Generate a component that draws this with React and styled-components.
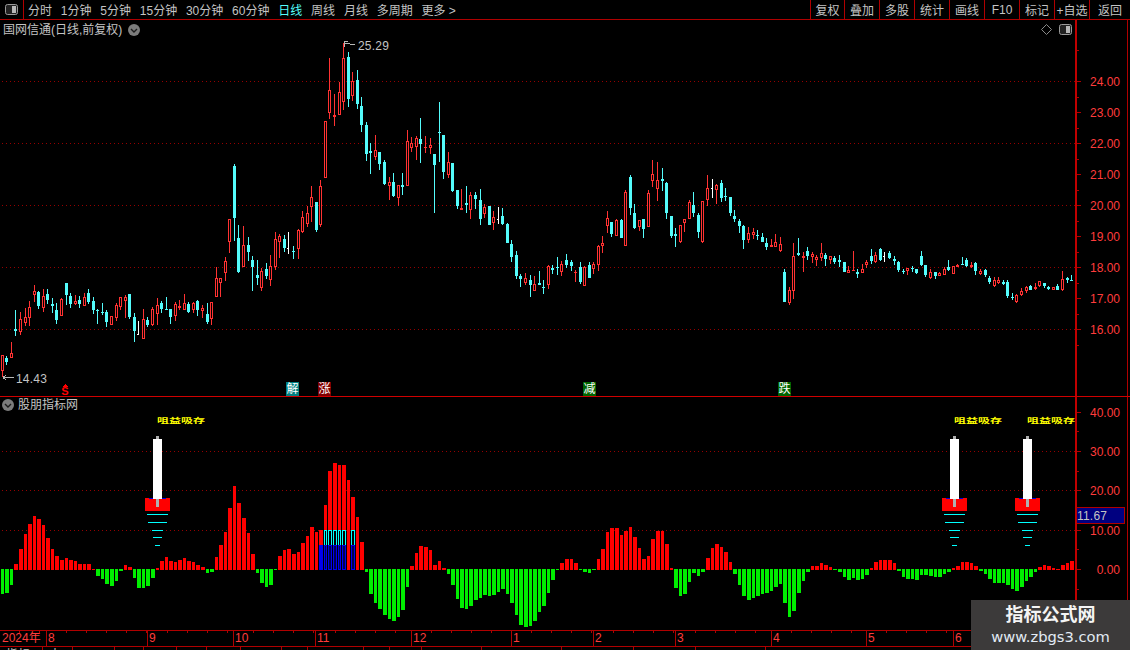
import React from 'react';
import styled, { createGlobalStyle } from 'styled-components';

const RED_LINE = '#b00000';
const AXIS_RED = '#ff3c3c';
const CANDLE_RED = '#ff3232';
const CANDLE_CYAN = '#54fcfc';
const GRID_RED = '#960000';
const FONT = '"Liberation Sans", "Noto Sans CJK SC", sans-serif';

// candles read off the chart: kind hi,top,bottom,lo (3x values above a base y)
const parse = (base, text) =>
  text.trim().split(/\s+/).map((tok) => {
    const [hi, top, bot, lo] = tok.slice(1).split(',').map((n) => Math.round(base + Number(n) / 3));
    return { kind: tok[0], hi, top, bot, lo };
  });

const candles = [
  ...parse(260, `r285,286,332,350 c288,293,305,316 r247,279,293,295 c150,207,213,228 r157,178,216,224
    r145,172,190,198 r124,141,173,198 r75,93,105,125 c94,96,138,146 r88,108,143,155 c87,102,120,132
    c115,132,138,158 c130,150,180,192 r115,117,167,168 c70,70,105,135 c98,108,132,145 r105,124,132,136
    c108,120,132,145 r98,112,137,138 c87,98,126,131 c110,123,150,162 c148,149,151,192 c128,155,157,165
    c150,156,186,201 r168,168,194,195 r130,135,173,183 r110,112,140,150 r105,112,122,173 c102,102,172,177
    c160,171,213,245 w183,222,225,225 r148,178,236,236 c170,180,196,200 r142,147,195,198 r113,136,162,195
    c122,128,147,158 c110,146,148,150 c147,148,171,192 r127,133,167,182 r120,138,143,150 r102,130,150,150
    c126,132,157,160 r125,130,150,160 c120,122,150,168 r136,145,152,174 c130,162,187,192 r125,127,176,195`),
  ...parse(160, `r322,355,412,412 r355,355,370,410 r292,304,338,362 r178,178,245,278 c12,18,174,243
    c195,234,335,338 r198,256,320,320 c232,255,276,302 c288,300,320,392 c300,345,353,374 r325,333,383,392
    c309,327,347,356 r285,318,361,377 r217,237,320,330 r222,229,245,293 c226,237,264,276 w216,264,267,282
    c258,273,275,297 r208,210,268,296 r153,172,216,220 r138,160,193,200 r78,112,142,186`),
  ...parse(30, `c516,516,600,606 r450,468,585,590 r274,274,445,445 r85,181,250,268 r193,255,260,288
    r155,187,254,254 r38,85,217,240 c67,82,207,230 r126,154,197,213 c120,150,221,236 c202,229,284,305
    c277,285,372,393 c340,364,369,432 r316,361,381,390 c365,366,402,420 c390,396,462,466 r442,457,468,510
    c430,457,498,502 r465,466,503,528 c430,465,470,495 r300,334,468,468 r322,340,354,366 r318,324,352,390
    c264,328,342,400 r318,351,352,369 r324,346,353,372 c372,372,405,549 c216,306,308,397 c315,315,426,446
    r366,396,435,444 c399,399,483,486 c480,480,528,537 r477,534,540,540 c468,519,525,550 r487,495,540,567
    c486,496,507,537 c477,510,567,585 r522,531,552,564`),
  ...parse(190, `c48,48,105,105 r63,81,98,120 w50,88,90,103 c54,78,102,105 c100,102,159,159 c150,162,201,216
    c183,195,258,267 c252,258,267,291 r250,264,279,285 c255,270,285,321 r258,282,303,303 c243,279,285,285
    c270,292,293,312 r225,228,285,297 c225,234,240,252 c201,231,233,255 r213,222,246,258 c192,210,225,234
    c210,216,228,243 r240,246,249,276 c216,231,276,282 r228,231,288,288 c216,225,264,264 r216,222,237,252
    r165,168,225,243 r138,159,168,189`),
  ...parse(150, `r183,204,228,250 c216,216,252,261 r208,210,258,258 c207,210,264,264 r120,126,288,288
    c75,81,174,195 c162,189,234,237 r210,210,231,243 c207,207,237,264 r120,129,231,231 r30,72,93,111
    r36,90,117,153 c54,87,93,123 c96,99,189,207 c198,198,258,264 c234,252,258,291 r225,225,276,279
    r207,207,219,246 r150,156,207,207 c126,165,189,201 c189,195,246,264 r153,153,276,279 r75,114,150,168
    w87,114,117,144 r102,105,120,162 c90,99,144,156 c114,138,141,153 c141,141,189,198 c180,198,207,216
    c207,213,228,249 c225,228,270,297 r232,249,270,279 r234,246,255,267 c240,255,258,270 c249,261,276,276
    c264,279,291,300 r267,286,291,291 r252,276,291,291 r261,282,303,306 c357,366,456,456 r411,420,459,465
    r279,318,423,447 c264,309,315,318 r306,318,324,366 c291,303,318,330 r306,312,321,339 r315,321,330,348
    r279,309,324,333 c309,315,327,348 r318,318,330,342 c318,324,336,342`),
  ...parse(235, `c60,75,81,96 c81,81,111,111 r93,105,114,114 r48,104,105,105 c102,111,117,129 r87,102,114,114
    r75,81,90,99 c42,63,78,87 r51,60,81,84 c39,42,75,78 w51,64,66,81 c48,54,69,72 c63,72,78,90 c78,81,105,111
    c102,108,111,117 r99,99,108,120 c93,99,102,111 c102,102,114,117 c48,63,90,93 c90,90,120,126 r102,111,129,132
    c111,111,123,132 r111,114,123,123 r96,102,120,120 c75,96,105,108 r93,93,117,117 r87,90,96,96 c66,87,90,90
    c69,75,93,96 r81,90,96,99 c81,84,108,120 r102,108,117,120 c102,105,120,126 c123,129,141,147 r126,135,153,156
    r126,135,144,147 c135,141,147,150 c135,141,183,189 c174,186,189,195 r177,180,201,204 r159,168,180,183
    r153,156,168,174 c150,153,165,165 r144,156,162,165 r138,138,153,156 c144,144,153,159 c153,156,162,165
    r156,156,165,165 c147,153,165,165 r108,132,165,168 c126,129,135,144 c120,135,138,138`),
];

// oscillator bar heights in px, + is red above zero, - is green below
const oscillator = [
  -25, -24, -16, 6, 21, 36, 46, 54, 51, 45, 32, 21, 14, 10, 12, 10, 9, 6, 6, 6, 1, -7, -10, -15, -17, -12,
  -2, 5, 3, -9, -19, -19, -17, -9, 2, 9, 13, 9, 8, 10, 12, 9, 8, 5, 3, -4, -3, 13, 25, 38, 62, 84, 67, 52,
  37, 16, -4, -14, -18, -16, -1, 14, 20, 21, 16, 18, 27, 34, 43, 38, 40, 65, 99, 107, 105, 105, 90, 73, 53,
  28, -3, -25, -34, -40, -46, -50, -52, -48, -41, -18, 4, 17, 24, 23, 20, 5, 9, 2, -5, -16, -30, -39, -40,
  -37, -31, -29, -26, -27, -26, -23, -20, -25, -34, -46, -56, -58, -57, -52, -43, -37, -24, -11, -1, 7, 11,
  11, 7, -1, -3, -4, -1, 11, 21, 38, 42, 42, 35, 39, 43, 33, 22, 11, 14, 31, 39, 39, 26, 2, -19, -27, -25,
  -13, -4, -7, -3, 12, 22, 26, 23, 18, 8, -5, -16, -27, -31, -29, -27, -25, -24, -22, -18, -15, -34, -48,
  -42, -24, -12, -3, 4, 4, 7, 5, 3, -1, -3, -8, -11, -9, -11, -10, -6, 2, 8, 10, 10, 10, 7, -2, -8, -10, -10,
  -11, -6, -6, -7, -8, -8, -5, -3, 2, 4, 8, 8, 7, 4, -2, -5, -10, -14, -14, -14, -16, -20, -22, -18, -12, -8,
  -3, 3, 5, 4, 2, 1, 5, 7, 9,
];

const col = (i) => Math.floor(2.3 + 4.55 * i);
const blueOnly = [70];
const hollowBlue = [71, 72, 73, 74, 75, 77];
const dotXs = Array.from({ length: 269 }, (_, i) => i * 4);

const GlobalStyle = createGlobalStyle`
  html, body {
    margin: 0;
    padding: 0;
    background: #000;
  }
`;

const Screen = styled.div`
  position: relative;
  display: flex;
  flex-direction: column;
  width: 1130px;
  height: 650px;
  overflow: hidden;
  background: #000;
  font-family: ${FONT};
  font-size: 12px;
  color: #c4c4c4;
`;

const TopBar = styled.div`
  display: flex;
  flex: 0 0 20px;
  box-sizing: border-box;
  align-items: stretch;
  border-bottom: 1px solid ${RED_LINE};
`;

const IconCell = styled.div`
  display: flex;
  flex: 0 0 23px;
  align-items: center;
  justify-content: center;
  border-right: 1px solid ${RED_LINE};
`;

const Nav = styled.nav`
  display: flex;
  flex: 1;
  align-items: center;
  gap: 8.8px;
  padding-left: 4px;
`;

const NavItem = styled.span`
  color: ${(p) => (p.$active ? CANDLE_CYAN : '#c4c4c4')};
  white-space: nowrap;
`;

const ToolButton = styled.span`
  display: flex;
  flex: 0 0 ${(p) => p.$w || 35}px;
  box-sizing: border-box;
  align-items: center;
  justify-content: center;
  border-left: 1px solid ${RED_LINE};
  white-space: nowrap;
`;

const Pane = styled.section`
  display: flex;
  flex: 0 0 ${(p) => p.$h}px;
  box-sizing: border-box;
  border-bottom: 1px solid ${(p) => p.$line || RED_LINE};
`;

const Plot = styled.div`
  position: relative;
  flex: 0 0 1075px;
  overflow: hidden;
`;

const ChartSvg = styled.svg`
  display: block;
  shape-rendering: crispEdges;
  font-family: ${FONT};
  font-size: 12px;

  text {
    shape-rendering: auto;
  }
`;

const Axis = styled.div`
  flex: 0 0 50px;
  border-left: 2px solid #c00000;
`;

const Strip = styled.div`
  flex: 1;
  border-left: 1px solid ${RED_LINE};
`;

const PaneTitle = styled.div`
  position: absolute;
  top: ${(p) => p.$top}px;
  left: ${(p) => p.$left}px;
  display: flex;
  align-items: center;
  gap: ${(p) => p.$gap}px;
  line-height: 16px;
`;

const CornerIcons = styled.div`
  position: absolute;
  top: 4px;
  right: 3px;
  display: flex;
  align-items: center;
  gap: 7px;
`;

const SignalTag = styled.span`
  position: absolute;
  top: 362px;
  left: ${(p) => p.$x}px;
  width: 13px;
  height: 14px;
  background: ${(p) => p.$bg};
  color: #fff;
  font-size: 12px;
  line-height: 14px;
  text-align: center;
`;

const DateBar = styled.div`
  display: flex;
  flex: 0 0 16px;
  box-sizing: border-box;
  border-bottom: 1px solid ${RED_LINE};
  color: ${AXIS_RED};
  line-height: 15px;
`;

const MonthCell = styled.span`
  flex: 0 0 ${(p) => p.$w}px;
  box-sizing: border-box;
  padding-left: ${(p) => (p.$first ? 2 : 1)}px;
  border-left: ${(p) => (p.$first ? 'none' : `1px solid ${RED_LINE}`)};
  background: repeating-linear-gradient(90deg, transparent 0 19px, ${RED_LINE} 19px 20px) top left / 100% 2px no-repeat;
`;

const BottomRow = styled.div`
  display: flex;
  flex: 1;
  overflow: hidden;
`;

const BottomCell = styled.span`
  flex: 0 0 ${(p) => p.$w}px;
  box-sizing: border-box;
  border-right: 1px solid ${RED_LINE};
  padding-left: 6px;
  font-size: 12px;
  line-height: 16px;
  color: #c4c4c4;
`;

const Watermark = styled.div`
  position: absolute;
  right: 0;
  bottom: 0;
  display: flex;
  flex-direction: column;
  align-items: center;
  width: 159px;
  height: 50px;
  background: #3c3a3a;
`;

const WatermarkTitle = styled.strong`
  margin-top: 3px;
  color: #f4f4f4;
  font-size: 18px;
  line-height: 25px;
`;

const WatermarkUrl = styled.span`
  color: #e2eaf4;
  font-family: "DejaVu Sans", sans-serif;
  font-size: 14.7px;
  line-height: 17px;
`;

const PanelIcon = () => (
  <svg width="13" height="11" viewBox="0 0 13 11">
    <rect x="0.5" y="0.5" width="12" height="10" rx="2" fill="#222" stroke="#9a9a9a" />
    <rect x="7" y="2" width="4" height="7" fill="#b8b8b8" />
  </svg>
);

const ChevronDot = () => (
  <svg width="12" height="12" viewBox="0 0 12 12">
    <circle cx="6" cy="6" r="6" fill="#7c7c7c" />
    <path d="M3 5 L6 8 L9 5" fill="none" stroke="#1c1c1c" strokeWidth="1.4" />
  </svg>
);

const Diamond = () => (
  <svg width="11" height="11" viewBox="0 0 11 11">
    <path d="M5.5 0.5 L10.5 5.5 L5.5 10.5 L0.5 5.5 Z" fill="none" stroke="#8a8a8a" />
  </svg>
);

const DottedLine = ({ y }) => (
  <g fill={GRID_RED}>
    {dotXs.map((x) => (
      <rect key={x} x={x + 2} y={y} width="1" height="1" />
    ))}
  </g>
);

const Candle = ({ c, i }) => {
  const x = col(i);
  const color = c.kind === 'r' ? CANDLE_RED : c.kind === 'w' ? '#ffffff' : CANDLE_CYAN;
  const h = c.bot - c.top;
  return (
    <g>
      <rect x={x} y={c.hi} width="1" height={Math.max(c.lo - c.hi, 1)} fill={color} />
      {c.kind === 'r' && h > 2 ? (
        <rect x={x - 0.5} y={c.top + 0.5} width="2" height={h - 1} fill="#000" stroke={color} />
      ) : c.kind === 'w' ? (
        <rect x={x - 1} y={c.top} width="2" height={Math.max(h, 1)} fill={color} />
      ) : (
        <rect x={x - 1} y={c.top} width="3" height={Math.max(h, 1)} fill={color} />
      )}
    </g>
  );
};

const PriceChart = () => (
  <ChartSvg width="1075" height="376" viewBox="0 20 1075 376">
    {[81, 143, 205, 267, 329].map((y) => (
      <DottedLine key={y} y={y} />
    ))}
    {candles.map((c, i) => (
      <Candle key={i} c={c} i={i} />
    ))}
    <path d="M344.5 47 V41.5 H348 M345 43.5 H349 L352 45 L355 44" fill="none" stroke="#b8b8b8" />
    <text x="358" y="50" fill="#c4c4c4" letterSpacing="0.2">25.29</text>
    <path d="M3 377.5 H14 M3 377.5 L6 375 M3 377.5 L6 380" fill="none" stroke="#b8b8b8" />
    <text x="16" y="383" fill="#c4c4c4" letterSpacing="0.2">14.43</text>
    <path d="M65 384 L68 387 H62 Z" fill="#ff0000" />
    <text x="65" y="395" textAnchor="middle" fill="#ff0000" fontSize="11" fontWeight="700">S</text>
  </ChartSvg>
);

const Tower = ({ dx }) => (
  <g transform={`translate(${dx} 0)`}>
    <text transform="translate(157 423) scale(1 0.55)" fill="#ffff00" fontSize="12" fontWeight="700">咀益吸存</text>
    <rect x="145" y="498" width="25" height="13" fill="#ff0000" />
    <rect x="149" y="498" width="17" height="1" fill="#0000e0" />
    <rect x="153" y="439" width="9" height="60" fill="#ffffff" />
    <rect x="156" y="436" width="3" height="3" fill="#b0b0b0" />
    <rect x="156" y="499" width="3" height="8" fill="#b0b0b0" />
    <rect x="147" y="514" width="21" height="1" fill="#00ffff" />
    <rect x="148" y="522" width="19" height="1" fill="#00ffff" />
    <rect x="152" y="530" width="11" height="1" fill="#00ffff" />
    <rect x="153" y="537" width="9" height="1" fill="#00ffff" />
    <rect x="155" y="545" width="5" height="1" fill="#00ffff" />
  </g>
);

const OscBar = ({ v, i }) => {
  const x = col(i) - 1;
  const w = col(i + 1) - col(i) - 1;
  if (v < 0) return <rect x={x} y="569" width={w} height={-v} fill="#00ee00" />;
  return (
    <g>
      <rect x={x} y={570 - v} width={w} height={v} fill="#ff0000" />
      {blueOnly.includes(i) && <rect x={x} y="545" width={w} height="25" fill="#0000f0" />}
      {hollowBlue.includes(i) && (
        <>
          <rect x={x + 0.5} y="530.5" width={w - 1} height="15" fill="#000" stroke="#00ffff" />
          <rect x={x + 0.5} y="545.5" width={w - 1} height="24" fill="#000050" stroke="#0000f0" />
        </>
      )}
    </g>
  );
};

const OscChart = () => (
  <ChartSvg width="1075" height="233" viewBox="0 397 1075 233">
    {[451, 490, 530].map((y) => (
      <DottedLine key={y} y={y} />
    ))}
    {oscillator.map((v, i) => (
      <OscBar key={i} v={v} i={i} />
    ))}
    {[0, 797, 870].map((dx) => (
      <Tower key={dx} dx={dx} />
    ))}
  </ChartSvg>
);

const priceTicks = [
  [81, '24.00'], [112, '23.00'], [143, '22.00'], [174, '21.00'], [205, '20.00'],
  [236, '19.00'], [267, '18.00'], [298, '17.00'], [329, '16.00'],
];
const oscTicks = [
  [412, '40.00'], [451, '30.00'], [490, '20.00'], [530, '10.00'], [569, '0.00'],
];

const AxisTicks = ({ ticks, minor }) => (
  <>
    {ticks.map(([y, label]) => (
      <g key={label}>
        <rect x="1077" y={y} width="4" height="1" fill={RED_LINE} />
        <text x="1120" y={y + 5} textAnchor="end" fill={AXIS_RED}>{label}</text>
      </g>
    ))}
    {minor.map((y) => (
      <rect key={y} x="1077" y={y} width="2" height="1" fill={RED_LINE} />
    ))}
  </>
);

const months = [
  ['2024年', 46], ['8', 101], ['9', 86], ['10', 82], ['11', 96], ['12', 100],
  ['1', 82], ['2', 82], ['3', 96], ['4', 95], ['5', 87], ['6', 177],
];
const bottomCells = [
  ['指标', 43], ['大', 30], ['', 42], ['', 29], ['', 33], ['', 30], ['', 34], ['', 41], ['', 26],
  ['', 56], ['', 26], ['', 32], ['', 60], ['', 80], ['', 72], ['', 62], ['', 70],
];

export default function App() {
  return (
    <Screen>
      <GlobalStyle />
      <TopBar>
        <IconCell>
          <PanelIcon />
        </IconCell>
        <Nav>
          {['分时', '1分钟', '5分钟', '15分钟', '30分钟', '60分钟'].map((t) => (
            <NavItem key={t}>{t}</NavItem>
          ))}
          <NavItem $active>日线</NavItem>
          {['周线', '月线', '多周期', '更多 >'].map((t) => (
            <NavItem key={t}>{t}</NavItem>
          ))}
        </Nav>
        <ToolButton $w={34}>复权</ToolButton>
        <ToolButton>叠加</ToolButton>
        <ToolButton>多股</ToolButton>
        <ToolButton>统计</ToolButton>
        <ToolButton>画线</ToolButton>
        <ToolButton>F10</ToolButton>
        <ToolButton>标记</ToolButton>
        <ToolButton>+自选</ToolButton>
        <ToolButton $w={41}>返回</ToolButton>
      </TopBar>

      <Pane $h={377} $line="#d00000">
        <Plot>
          <PriceChart />
          <PaneTitle $top={2} $left={3} $gap={6}>
            国网信通(日线,前复权)
            <ChevronDot />
          </PaneTitle>
          <CornerIcons>
            <Diamond />
            <PanelIcon />
          </CornerIcons>
          <SignalTag $x={286} $bg="#008080">解</SignalTag>
          <SignalTag $x={318} $bg="#800000">涨</SignalTag>
          <SignalTag $x={583} $bg="#006400">减</SignalTag>
          <SignalTag $x={778} $bg="#006400">跌</SignalTag>
        </Plot>
        <Axis>
          <ChartSvg width="48" height="376" viewBox="1077 20 48 376">
            <AxisTicks ticks={priceTicks} minor={[50, 97, 128, 159, 190, 221, 252, 283, 314, 345]} />
          </ChartSvg>
        </Axis>
        <Strip />
      </Pane>

      <Pane $h={234}>
        <Plot>
          <OscChart />
          <PaneTitle $top={0} $left={2} $gap={4}>
            <ChevronDot />
            股朋指标网
          </PaneTitle>
        </Plot>
        <Axis>
          <ChartSvg width="48" height="233" viewBox="1077 397 48 233">
            <AxisTicks ticks={oscTicks} minor={[431, 471, 510, 549, 589, 608]} />
            <rect x="1077" y="507" width="48" height="17" fill={RED_LINE} />
            <rect x="1077" y="508" width="47" height="15" fill="#000080" />
            <text x="1077" y="520" fill="#c4c4c4" letterSpacing="0.2">11.67</text>
          </ChartSvg>
        </Axis>
        <Strip />
      </Pane>

      <DateBar>
        {months.map(([label, w], i) => (
          <MonthCell key={label} $w={w} $first={i === 0}>{label}</MonthCell>
        ))}
      </DateBar>

      <BottomRow>
        {bottomCells.map(([label, w], i) => (
          <BottomCell key={i} $w={w}>{label}</BottomCell>
        ))}
      </BottomRow>

      <Watermark>
        <WatermarkTitle>指标公式网</WatermarkTitle>
        <WatermarkUrl>www.zbgs3.com</WatermarkUrl>
      </Watermark>
    </Screen>
  );
}
